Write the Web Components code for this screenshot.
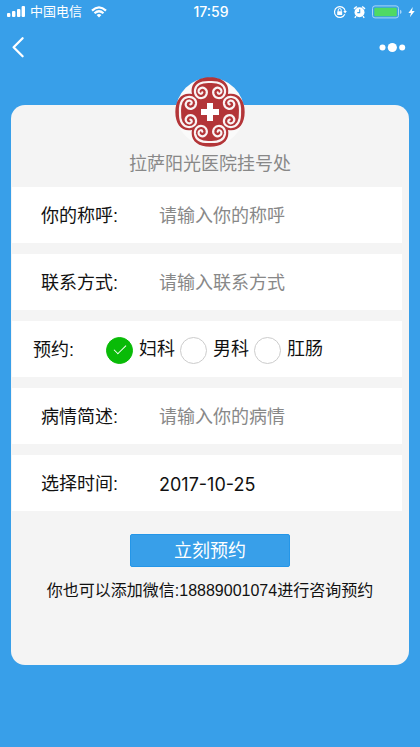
<!DOCTYPE html>
<html lang="zh-CN">
<head>
<meta charset="utf-8">
<meta name="viewport" content="width=device-width, initial-scale=1">
<title>挂号预约</title>
<style>
    body {
        margin: 0;
        min-height: 100vh;
        background: #389fe9;
        color: #111;
        font-family: "Liberation Sans", "Noto Sans CJK SC", sans-serif;
        font-size: 18px;
        line-height: 24px;
    }
</style>
</head>
<body>
<status-bar carrier="中国电信" time="17:59"></status-bar>
<nav-bar></nav-bar>
<booking-card>
    <hospital-logo slot="logo"></hospital-logo>
    <span slot="title">拉萨阳光医院挂号处</span>
    <form-field label="你的称呼:" placeholder="请输入你的称呼"></form-field>
    <form-field label="联系方式:" placeholder="请输入联系方式"></form-field>
    <radio-field label="预约:" options="妇科,男科,肛肠"></radio-field>
    <form-field label="病情简述:" placeholder="请输入你的病情"></form-field>
    <form-field label="选择时间:" value="2017-10-25"></form-field>
    <submit-button slot="action">立刻预约</submit-button>
    <span slot="note">你也可以添加微信:18889001074进行咨询预约</span>
</booking-card>

<script>
class StatusBar extends HTMLElement {
    connectedCallback() {
        this.attachShadow({ mode: 'open' });
        this.shadowRoot.innerHTML = `
        <style>
            :host {
                display: grid;
                grid-template-columns: 1fr auto 1fr;
                align-items: center;
                height: 24px;
                padding: 0 5px 0 7px;
                color: white;
                font-size: 13px;
                line-height: 24px;
            }
            div { display: flex; align-items: center; gap: 5px; }
            .right { justify-content: flex-end; gap: 6px; }
            .time { font-family: Inter, sans-serif; font-size: 14px; font-weight: 500; }
            .wifi { margin-left: 4px; }
            svg { display: block; }
        </style>
        <div>
            <svg width="18" height="12" viewBox="0 0 18 12" fill="white">
                <rect x="0" y="7" width="3.4" height="4" rx="1"/>
                <rect x="5" y="5" width="3.4" height="6" rx="1"/>
                <rect x="10" y="3" width="3.4" height="8" rx="1"/>
                <rect x="14.6" y="0" width="3.4" height="11" rx="1"/>
            </svg>
            <span>${this.getAttribute("carrier")}</span>
            <svg class="wifi" width="16" height="12" viewBox="0 0 16 12" fill="none" stroke="white" stroke-width="2.2">
                <path d="M1 4.6Q8-2 15 4.6M3.5 7.3Q8 3.2 12.5 7.3"/>
                <path d="M5.6 9Q8 7 10.4 9L8 11.6Z" fill="white" stroke="none"/>
            </svg>
        </div>
        <span class="time">${this.getAttribute("time")}</span>
        <div class="right">
            <svg width="14" height="14" viewBox="0 0 14 14" fill="none" stroke="white">
                <path d="M11.8 9.3A5.4 5.4 0 1 1 12.2 6" stroke-width="1.2"/>
                <path d="M10.3 6h3.6l-1.8 2.5z" fill="white" stroke="none"/>
                <rect x="4.2" y="6.2" width="5" height="3.8" rx=".5" fill="white" stroke="none"/>
                <path d="M5.2 6.5V5a1.5 1.5 0 0 1 3 0v1.5"/>
            </svg>
            <svg width="13" height="14" viewBox="0 0 13 14" fill="white">
                <circle cx="6.5" cy="7.3" r="5"/>
                <path d="M1 3.9 3.8 1.5M12 3.9 9.2 1.5M3 11.2 1.8 12.8M10 11.2l1.2 1.6" stroke="white" stroke-width="1.4"/>
                <path d="M6.7 4.3v3.3H4.3" fill="none" stroke="#389fe9" stroke-width="1.1"/>
            </svg>
            <svg width="30" height="14" viewBox="0 0 30 14">
                <rect x=".5" y=".9" width="26" height="12" rx="2.5" fill="none" stroke="#a9d6f7"/>
                <rect x="2.3" y="2.7" width="22.5" height="8.5" rx="1" fill="#4fd964"/>
                <path d="M28 4.7q1.6.6 1.6 2.2T28 9.1z" fill="#a9d6f7"/>
            </svg>
            <svg width="7" height="12" viewBox="0 0 7 12" fill="white">
                <path d="M4.8 1 .4 7h2.5l-1 4.3L6.7 5H4z"/>
            </svg>
        </div>
        `;
    }
}
window.customElements.define('status-bar', StatusBar);

class NavBar extends HTMLElement {
    connectedCallback() {
        this.attachShadow({ mode: 'open' });
        this.shadowRoot.innerHTML = `
        <style>
            :host {
                display: flex;
                justify-content: space-between;
                align-items: center;
                height: 46px;
                padding: 0 14px 0 11px;
            }
            button { border: 0; padding: 0; background: none; }
            svg { display: block; }
        </style>
        <button type="button" aria-label="返回">
            <svg width="14" height="22" viewBox="0 0 14 22" fill="none" stroke="white" stroke-width="2.3" stroke-linecap="round" stroke-linejoin="round">
                <path d="M11.6 2.2 2.6 11.2l9 9"/>
            </svg>
        </button>
        <button type="button" aria-label="更多">
            <svg width="27" height="12" viewBox="0 0 27 12" fill="white">
                <circle cx="3.5" cy="6.5" r="3"/>
                <circle cx="13.3" cy="6.5" r="4.6"/>
                <circle cx="23.2" cy="6.5" r="3"/>
            </svg>
        </button>
        `;
    }
}
window.customElements.define('nav-bar', NavBar);

class HospitalLogo extends HTMLElement {
    connectedCallback() {
        this.attachShadow({ mode: 'open' });
        // four lobes, each with a mirrored pair of scrolls
        const scroll = "M0-90C24-91 42-84 45-66C47-50 36-40 24-42C9-45 5-62 15-70C24-77 36-70 34-60C32-53 24-53 23-59";
        const lobes = [0, 90, 180, 270].map(a => `
            <g transform="rotate(${a})">
                <path d="${scroll}"/>
                <path d="${scroll}" transform="scale(-1 1)"/>
            </g>`).join("");
        this.shadowRoot.innerHTML = `
        <style>
            :host { display: block; }
            svg { display: block; }
        </style>
        <svg width="70" height="70" viewBox="-105 -105 210 210" role="img" aria-label="医院标志">
            <circle r="103" fill="#fafafa"/>
            <path fill="#b33538" d="M-54-54C-60-84-38-104 0-104S60-84 54-54C84-60 104-38 104 0S84 60 54 54C60 84 38 104 0 104S-60 84-54 54C-84 60-104 38-104 0S-84-60-54-54Z"/>
            <g fill="none" stroke="#faf4f4" stroke-width="6.5" stroke-linecap="round">${lobes}</g>
            <path fill="white" d="M-9-27H9V-9H27V9H9V27H-9V9H-27V-9H-9Z"/>
        </svg>
        `;
    }
}
window.customElements.define('hospital-logo', HospitalLogo);

class BookingCard extends HTMLElement {
    connectedCallback() {
        this.attachShadow({ mode: 'open' });
        this.shadowRoot.innerHTML = `
        <style>
            :host {
                display: block;
                margin: 35px 11px 0;
                padding-bottom: 62px;
                background: #f4f4f4;
                border-radius: 14px;
            }
            form { display: flex; flex-direction: column; }
            header {
                display: flex;
                flex-direction: column;
                align-items: center;
                gap: 5px;
                margin-top: -28px;
                padding-bottom: 11px;
                color: #888;
            }
            .fields {
                display: flex;
                flex-direction: column;
                gap: 11px;
                padding: 0 7px 0 1px;
            }
            .action { align-self: center; margin-top: 23px; }
            .note {
                margin-top: 12px;
                text-align: center;
                font-size: 16px;
            }
        </style>
        <form>
            <header>
                <slot name="logo"></slot>
                <slot name="title"></slot>
            </header>
            <div class="fields"><slot></slot></div>
            <div class="action"><slot name="action"></slot></div>
            <div class="note"><slot name="note"></slot></div>
        </form>
        `;
    }
}
window.customElements.define('booking-card', BookingCard);

class FormField extends HTMLElement {
    connectedCallback() {
        this.attachShadow({ mode: 'open' });
        this.shadowRoot.innerHTML = `
        <style>
            :host {
                box-sizing: border-box;
                display: grid;
                grid-template-columns: 118px 1fr;
                align-items: center;
                height: 56px;
                padding: 2px 16px 0 29px;
                background: white;
            }
            input {
                min-width: 0;
                height: 32px;
                border: 0;
                padding: 0;
                outline: 0;
                background: none;
                color: inherit;
                font: inherit;
            }
            input::placeholder { color: #888; opacity: 1; }
            .filled { font-family: Inter, sans-serif; }
        </style>
        <label for="field"></label>
        <input id="field" type="text">
        `;
        const input = this.shadowRoot.querySelector("input");
        this.shadowRoot.querySelector("label").textContent = this.getAttribute("label");
        input.placeholder = this.getAttribute("placeholder") ?? "";
        if (this.hasAttribute("value")) {
            input.value = this.getAttribute("value");
            input.className = "filled";
        }
    }
}
window.customElements.define('form-field', FormField);

class RadioField extends HTMLElement {
    connectedCallback() {
        this.attachShadow({ mode: 'open' });
        const options = this.getAttribute("options").split(",");
        this.shadowRoot.innerHTML = `
        <style>
            :host {
                box-sizing: border-box;
                display: grid;
                grid-template-columns: 73px 1fr;
                align-items: center;
                height: 56px;
                padding: 2px 16px 0 21px;
                background: white;
            }
            .options { display: flex; gap: 5px; }
            label { display: flex; align-items: center; gap: 6px; }
            label span { padding-bottom: 2px; }
            input {
                appearance: none;
                box-sizing: border-box;
                display: grid;
                place-items: center;
                width: 27px;
                height: 27px;
                margin: 0;
                border: 1px solid #ccc;
                border-radius: 50%;
                background: white;
            }
            input:checked { border-color: #09bb07; background: #09bb07; }
            input:checked::before {
                content: "";
                width: 11px;
                height: 5px;
                margin-bottom: 4px;
                border: solid white;
                border-width: 0 0 1px 1px;
                transform: rotate(-45deg);
            }
        </style>
        <span id="caption">${this.getAttribute("label")}</span>
        <div class="options" role="radiogroup" aria-labelledby="caption">
            ${options.map((text, indx) => `
            <label>
                <input type="radio" name="department" value="${text}" ${indx == 0 ? "checked" : ""}>
                <span>${text}</span>
            </label>`).join("")}
        </div>
        `;
    }
}
window.customElements.define('radio-field', RadioField);

class SubmitButton extends HTMLElement {
    connectedCallback() {
        this.attachShadow({ mode: 'open' });
        this.shadowRoot.innerHTML = `
        <style>
            :host { display: block; }
            button {
                display: block;
                width: 160px;
                height: 33px;
                padding: 0;
                border: 1px solid #2496e8;
                border-radius: 2px;
                background: #389fe9;
                color: white;
                font: inherit;
            }
        </style>
        <button type="button"><slot></slot></button>
        `;
    }
}
window.customElements.define('submit-button', SubmitButton);
</script>
</body>
</html>
